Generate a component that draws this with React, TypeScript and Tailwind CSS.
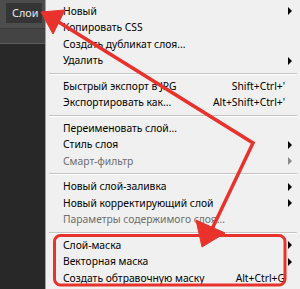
type Item = {
  label: string;
  shortcut?: string;
  sub?: boolean;
  disabled?: boolean;
};

const groups: Item[][] = [
  [
    { label: "Новый", sub: true },
    { label: "Копировать CSS" },
    { label: "Создать дубликат слоя..." },
    { label: "Удалить", sub: true },
  ],
  [
    { label: "Быстрый экспорт в JPG", shortcut: "Shift+Ctrl+'" },
    { label: "Экспортировать как...", shortcut: "Alt+Shift+Ctrl+'" },
  ],
  [
    { label: "Переименовать слой..." },
    { label: "Стиль слоя", sub: true },
    { label: "Смарт-фильтр", sub: true, disabled: true },
  ],
  [
    { label: "Новый слой-заливка", sub: true },
    { label: "Новый корректирующий слой", sub: true },
    { label: "Параметры содержимого слоя...", disabled: true },
  ],
  [
    { label: "Слой-маска", sub: true },
    { label: "Векторная маска", sub: true },
    { label: "Создать обтравочную маску", shortcut: "Alt+Ctrl+G" },
  ],
];

export default function App() {
  return (
    <div
      className="relative w-[300px] h-[289px] overflow-hidden flex bg-[#282828]"
      style={{ fontFamily: '"Noto Sans", "Open Sans", sans-serif' }}
    >
      {/* dark panel on the left */}
      <div className="w-[45px] flex flex-col shrink-0">
        <div className="h-[28px] bg-[#4d4d4d] pt-[3px] pl-[6px]">
          <div className="w-[36px] h-[20px] bg-[#353535] text-[#e8e8e8] text-[10.8px] leading-[20px] pl-[6px]">
            Слои
          </div>
        </div>
        <div className="h-[16px] bg-[#444444] border-t border-[#3a3a3a] border-b border-b-[#5e5e5e]" />
        <div className="flex-1 bg-[#282828]" />
      </div>

      {/* context menu */}
      <div className="flex-1 bg-[#f0f0f0] border-l border-[#a0a0a0] pt-[3px] text-[10.3px] text-black">
        {groups.map((g, gi) => (
          <div key={gi}>
            {gi > 0 && <Separator />}
            {g.map((it) => (
              <MenuRow key={it.label} item={it} />
            ))}
          </div>
        ))}
      </div>

      {/* red annotations */}
      <svg className="absolute inset-0 pointer-events-none" width="300" height="289" viewBox="0 0 300 289">
        <g fill="#e8322b" stroke="#e8322b">
          <polygon points="41,12 65,10 53,34" strokeWidth="1" strokeLinejoin="round" />
          <polyline points="57,21 253,143 212,229" fill="none" strokeWidth="3.5" strokeLinejoin="miter" />
          <polygon points="202,247 196,220 225,233" strokeWidth="1" strokeLinejoin="round" />
          <rect x="54.5" y="235.5" width="230.5" height="49.5" rx="6" fill="none" strokeWidth="3" />
        </g>
      </svg>
    </div>
  );
}

function Separator() {
  return (
    <div className="h-[9px] flex flex-col justify-center pl-[3px] pr-[3px]">
      <div className="h-px bg-[#c4c4c4]" />
      <div className="h-px bg-white" />
    </div>
  );
}

function MenuRow({ item }: { item: Item }) {
  return (
    <div
      className={`h-[16.5px] flex items-center pl-[17px] pr-[8px] whitespace-nowrap ${
        item.disabled ? "text-[#6d6d6d]" : "text-black"
      }`}
    >
      <span className="flex-1">{item.label}</span>
      {item.shortcut && <span className="pr-[7px]">{item.shortcut}</span>}
      {item.sub && (
        <span
          className={`w-0 h-0 border-y-[4px] border-y-transparent border-l-[4px] ${
            item.disabled ? "border-l-[#8a8a8a]" : "border-l-black"
          }`}
        />
      )}
    </div>
  );
}
